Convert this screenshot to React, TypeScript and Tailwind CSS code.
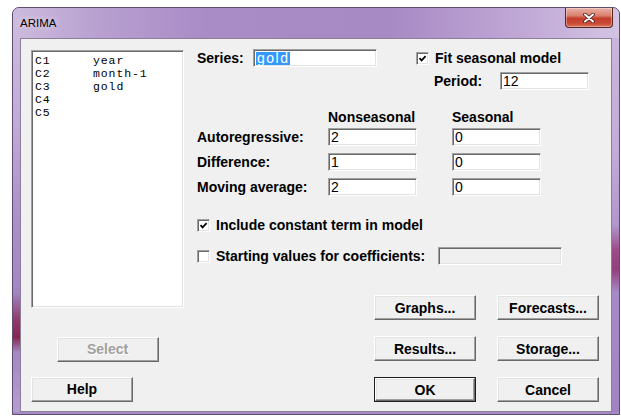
import type { ReactNode } from 'react';
import clsx from 'clsx';

const sans = "font-['Liberation_Sans',Arial,sans-serif]";

// sunken edit box, classic 3D style
function Field({ w, disabled, children }: { w: string; disabled?: boolean; children?: ReactNode }) {
  return (
    <div
      className={clsx(
        'h-[18px] flex items-center pl-[2px] border border-t-[#a0a0a0] border-l-[#a0a0a0] border-r-white border-b-white shadow-[inset_1px_1px_0_#696969,inset_-1px_-1px_0_#e3e3e3] text-[14px] leading-[16px] font-normal text-black overflow-hidden whitespace-nowrap',
        disabled ? 'bg-[#f0f0f0]' : 'bg-white',
        w,
      )}
    >
      {children}
    </div>
  );
}

function Check({ on }: { on?: boolean }) {
  return (
    <div className="w-[13px] h-[13px] shrink-0 bg-white border border-t-[#a0a0a0] border-l-[#a0a0a0] border-r-white border-b-white shadow-[inset_1px_1px_0_#696969,inset_-1px_-1px_0_#e3e3e3] flex items-center justify-center">
      {on && (
        <svg width="9" height="9" viewBox="0 0 9 9">
          <path d="M1.5 4.2 L3.6 6.4 L7.6 2.2" fill="none" stroke="#000" strokeWidth="1.7" />
        </svg>
      )}
    </div>
  );
}

function Btn({ label, disabled, isDefault }: { label: string; disabled?: boolean; isDefault?: boolean }) {
  const face = (
    <div
      className={clsx(
        'w-full h-full flex items-center justify-center bg-[#f0f0f0] border border-t-white border-l-white border-r-[#696969] border-b-[#696969] shadow-[inset_-1px_-1px_0_#a0a0a0,inset_1px_1px_0_#e3e3e3] text-[14px] font-bold',
        disabled ? 'text-[#a0a0a0] [text-shadow:1px_1px_0_#fff]' : 'text-black',
      )}
    >
      {label}
    </div>
  );
  if (isDefault) {
    return <div className="w-[102px] h-[25px] border border-[#1e1e1e]">{face}</div>;
  }
  return <div className="w-[102px] h-[25px]">{face}</div>;
}

const columns = [
  ['C1', 'year'],
  ['C2', 'month-1'],
  ['C3', 'gold'],
  ['C4', ''],
  ['C5', ''],
];

const orders = [
  ['Autoregressive:', '2', '0'],
  ['Difference:', '1', '0'],
  ['Moving average:', '2', '0'],
];

export default function App() {
  return (
    <div className={clsx('w-[621px] h-[417px] bg-white pl-[12px] pt-[7px] overflow-hidden', sans)}>
      <div className="w-[608px] h-[408px] flex flex-col rounded-t-[7px] border border-[#5e4d72] bg-[#a88bc6] overflow-hidden">
        {/* title bar */}
        <div className="h-[30px] shrink-0 flex items-start justify-between bg-[linear-gradient(90deg,#cdbbde_0%,#b8a0d0_14%,#a98bc6_32%,#a789c4_62%,#c0a8d6_84%,#d3c4e2_100%)]">
          <span className="mt-[8px] ml-[7px] text-[11.5px] leading-[14px] text-black [text-shadow:0_0_6px_rgba(255,255,255,0.8)]">
            ARIMA
          </span>
          <div className="mr-[6px] w-[48px] h-[20px] rounded-b-[4px] border border-t-0 border-[#5c2620] bg-[linear-gradient(180deg,#eab0a4_0%,#d9806f_40%,#c43d2c_55%,#c94a36_80%,#d87158_100%)] shadow-[inset_0_0_0_1px_rgba(255,255,255,0.35)] flex items-center justify-center">
            <svg width="12" height="10" viewBox="0 0 12 10">
              <path d="M2 1.5 L10 8.5 M10 1.5 L2 8.5" stroke="#4a1a14" strokeWidth="3.6" strokeLinecap="round" />
              <path d="M2 1.5 L10 8.5 M10 1.5 L2 8.5" stroke="#fff" strokeWidth="2" strokeLinecap="round" />
            </svg>
          </div>
        </div>

        <div className="flex h-[374px]">
          <div className="w-[7px] bg-[linear-gradient(180deg,#cbb8dc_0%,#c1abd7_22%,#ae92ca_45%,#a385c3_68%,#8f3564_76%,#86254f_80%,#a487c4_84%,#b59dd0_100%)]" />

          {/* client area */}
          <div className="w-[592px] h-[374px] border border-[#8c8099] bg-[#f0f0f0] flex">
            {/* left column: column list + buttons */}
            <div className="ml-[10px] w-[153px] flex flex-col">
              <div className="mt-[11px] h-[258px] bg-white border border-t-[#a0a0a0] border-l-[#a0a0a0] border-r-white border-b-white shadow-[inset_1px_1px_0_#696969,inset_-1px_-1px_0_#e3e3e3] pt-[3px] pl-[3px] font-['Liberation_Mono','Courier_New',monospace] text-[11.5px] leading-[13px] tracking-[0.9px] text-black">
                {columns.map(([c, name]) => (
                  <div key={c} className="flex h-[13px]">
                    <span className="w-[58px]">{c}</span>
                    <span>{name}</span>
                  </div>
                ))}
              </div>
              <div className="mt-[29px] self-center">
                <Btn label="Select" disabled />
              </div>
              <div className="mt-[15px]">
                <Btn label="Help" />
              </div>
            </div>

            {/* right column: model options */}
            <div className="ml-[13px] flex flex-col text-[14px] leading-[16px] font-bold text-black">
              <div className="mt-[10px] h-[18px] flex items-center">
                <span className="w-[56px]">Series:</span>
                <Field w="w-[124px]">
                  <span className="bg-[#3399ff] text-white px-[1px] leading-[13px] tracking-[1.5px]">gold</span>
                </Field>
                <div className="ml-[39px] flex items-center gap-[6px]">
                  <Check on />
                  <span className="whitespace-nowrap">Fit seasonal model</span>
                </div>
              </div>

              <div className="mt-[5px] h-[18px] flex items-center pl-[237px]">
                <span className="w-[66px]">Period:</span>
                <Field w="w-[89px]">12</Field>
              </div>

              <div className="mt-[19px] h-[16px] grid grid-cols-[131px_124px_89px]">
                <span />
                <span>Nonseasonal</span>
                <span>Seasonal</span>
              </div>

              <div className="mt-[3px] grid grid-cols-[131px_124px_89px] gap-y-[7px] items-center">
                {orders.map(([label, ns, s]) => (
                  <div key={label} className="contents">
                    <span className="whitespace-nowrap">{label}</span>
                    <Field w="w-[89px]">{ns}</Field>
                    <Field w="w-[89px]">{s}</Field>
                  </div>
                ))}
              </div>

              <div className="mt-[21px] h-[16px] flex items-center gap-[6px]">
                <Check on />
                <span className="whitespace-nowrap">Include constant term in model</span>
              </div>

              <div className="mt-[14px] h-[18px] flex items-center">
                <Check />
                <span className="ml-[6px] w-[222px] whitespace-nowrap">Starting values for coefficients:</span>
                <Field w="w-[124px]" disabled />
              </div>

              <div className="mt-[30px] ml-[177px] grid grid-cols-[102px_102px] gap-x-[21px] gap-y-[16px]">
                <Btn label="Graphs..." />
                <Btn label="Forecasts..." />
                <Btn label="Results..." />
                <Btn label="Storage..." />
                <Btn label="OK" isDefault />
                <Btn label="Cancel" />
              </div>
            </div>
          </div>

          <div className="w-[7px] bg-[linear-gradient(180deg,#c9b5db_0%,#c2acd8_30%,#b296cc_50%,#9a4a86_57%,#94407c_62%,#a68ac6_68%,#a084c2_100%)]" />
        </div>

        <div className="h-[2px] bg-[#a78bc5]" />
      </div>
    </div>
  );
}
